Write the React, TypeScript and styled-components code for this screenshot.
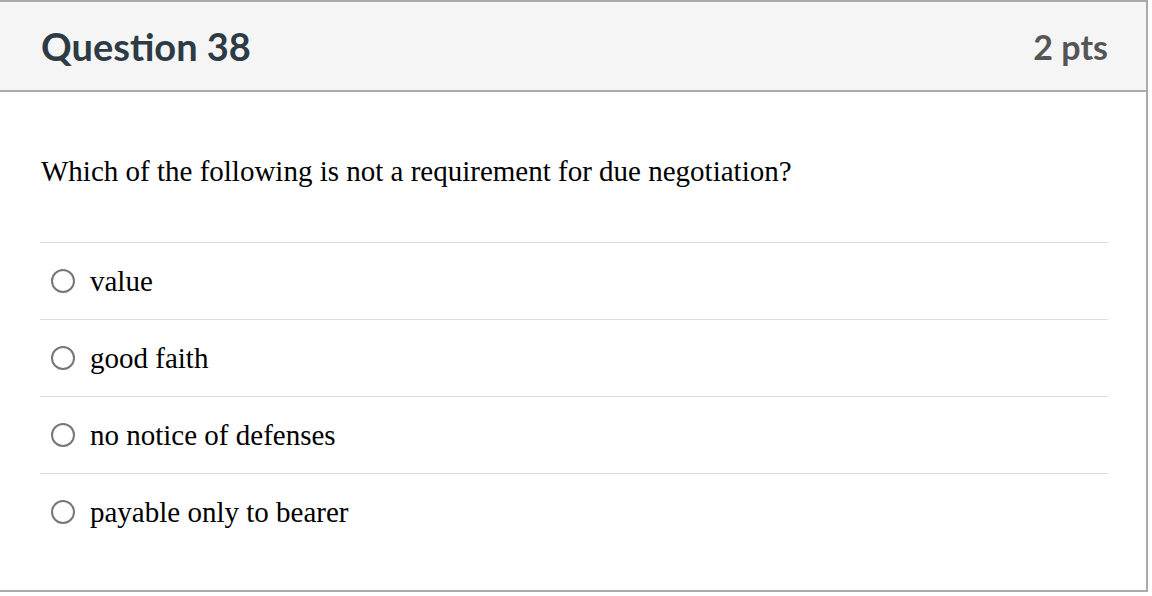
import * as React from 'react';
import styled, { createGlobalStyle } from 'styled-components';

const GlobalStyle = createGlobalStyle`
  html, body {
    margin: 0;
    padding: 0;
    background: #ffffff;
  }
`;

const Card = styled.div`
  width: 1146px;
  border: 2px solid #aaaaaa;
  border-left: none;
  background: #ffffff;
`;

const Header = styled.div`
  display: flex;
  align-items: center;
  justify-content: space-between;
  height: 88px;
  padding: 0 38px 0 41px;
  background: #f5f5f5;
  border-bottom: 2px solid #aaaaaa;
  font-family: Lato, 'Noto Sans', sans-serif;
  font-weight: 700;
`;

const Title = styled.h2`
  margin: 0;
  font-size: 38px;
  font-weight: 700;
  color: #2d3b45;
`;

const Points = styled.div`
  font-size: 34px;
  color: #555555;
`;

const Body = styled.div`
  padding: 0 38px 40px 40px;
  font-family: 'Liberation Serif', 'Times New Roman', serif;
  color: #000000;
`;

const Prompt = styled.p`
  margin: 0;
  padding: 62px 0 54px 1px;
  font-size: 29px;
  line-height: 34px;
`;

const Answer = styled.label`
  display: flex;
  align-items: center;
  gap: 15px;
  height: 76px;
  border-top: 1px solid #dddddd;
  font-size: 29px;
`;

const Radio = styled.span`
  box-sizing: border-box;
  width: 24px;
  height: 24px;
  margin-left: 11px;
  border: 2px solid #777777;
  border-radius: 50%;
  background: #ffffff;
`;

const answers = ['value', 'good faith', 'no notice of defenses', 'payable only to bearer'];

export default function App() {
  return (
    <>
      <GlobalStyle />
      <Card>
        <Header>
          <Title>Question 38</Title>
          <Points>2 pts</Points>
        </Header>
        <Body>
          <Prompt>Which of the following is not a requirement for due negotiation?</Prompt>
          {answers.map((a) => (
            <Answer key={a}>
              <Radio />
              {a}
            </Answer>
          ))}
        </Body>
      </Card>
    </>
  );
}
